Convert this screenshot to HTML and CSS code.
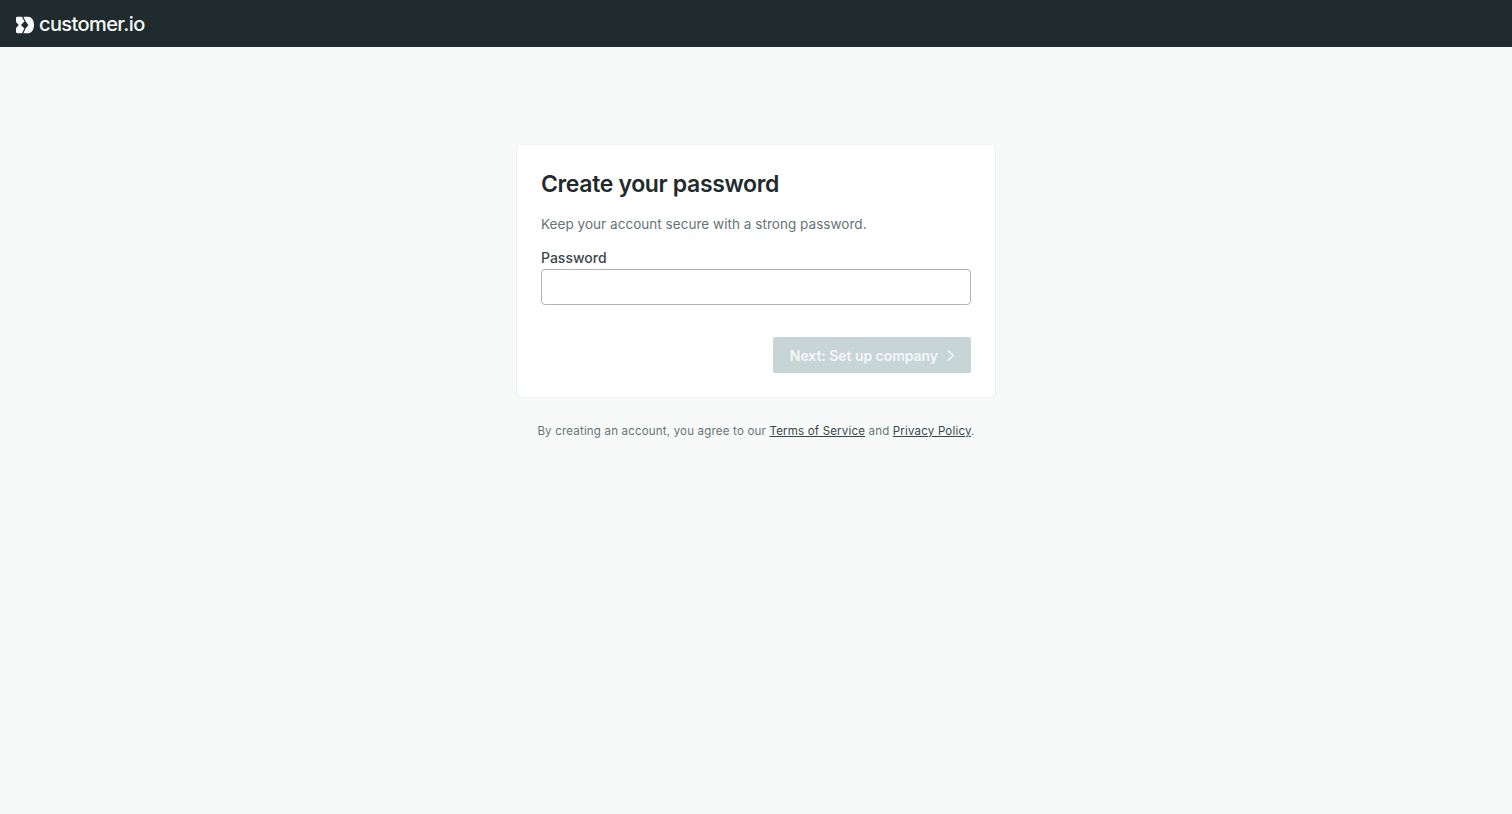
FILE: index.html
```html
<!DOCTYPE html>
<html lang="en">
<head>
    <meta charset="UTF-8">
    <meta name="viewport" content="width=device-width, initial-scale=1.0">
    <title>Create your password</title>
    <link rel="stylesheet" href="styles.css">
</head>
<body>
    <header class="topbar">
        <a class="logo" href="#">
            <svg class="logo-mark" width="18" height="18" viewBox="0 0 18 18">
                <path d="M0 2.2Q0 .8 1.4 .8H6L8.4 5.4L5 9L8.4 12.6L6 17.2H1.4Q0 17.2 0 15.8V12L2.8 9L0 6Z" fill="#f7faf8"/>
                <path d="M7.4 .8H12.5C15.8 .8 18 4.6 18 9C18 13.4 15.8 17.2 12.5 17.2H7.4L9.6 12.6L12.4 9L9.6 5.4Z" fill="#f7faf8"/>
            </svg>
            <span class="logo-text">customer.io</span>
        </a>
    </header>
    <main class="page">
        <div class="card">
            <h1>Create your password</h1>
            <p class="intro">Keep your account secure with a strong password.</p>
            <form>
                <label for="password">Password</label>
                <input type="password" id="password">
                <div class="actions">
                    <button type="button" disabled>
                        Next: Set up company
                        <svg class="chevron" width="9" height="13" viewBox="0 0 9 13"><path d="M2 1.5L7 6.5L2 11.5" fill="none" stroke="currentColor" stroke-width="1.6"/></svg>
                    </button>
                </div>
            </form>
        </div>
        <p class="terms">By creating an account, you agree to our <a href="#">Terms of Service</a> and <a href="#">Privacy Policy</a>.</p>
    </main>
</body>
</html>
```

FILE: styles.css
```css
body {
    font-family: Inter, "Liberation Sans", sans-serif;
    background: #f8faf9;
    color: #1f2b2d;
    margin: 0;
    padding: 0;
}
.topbar {
    display: flex;
    align-items: center;
    height: 47px;
    padding: 0 16px;
    box-sizing: border-box;
    background: #1f2b2d;
}
.logo {
    display: flex;
    align-items: center;
    gap: 5px;
    color: #f7faf8;
    text-decoration: none;
}
.logo-mark {
    margin-top: 2px;
}
.logo-text {
    font-size: 20px;
    font-weight: 500;
    letter-spacing: -0.6px;
}
.page {
    display: flex;
    flex-direction: column;
    align-items: center;
    padding-top: 97px;
}
.card {
    width: 480px;
    box-sizing: border-box;
    padding: 24px;
    background: white;
    border: 1px solid #eef1f0;
    border-radius: 4px;
}
h1 {
    margin: 0;
    font-size: 23px;
    line-height: 30px;
    font-weight: 600;
    letter-spacing: -0.35px;
    color: #1f2b2d;
}
.intro {
    margin: 16px 0 0;
    font-size: 13.5px;
    line-height: 19px;
    color: #667477;
    letter-spacing: 0.04px;
}
label {
    display: block;
    margin-top: 14px;
    font-size: 14px;
    line-height: 20px;
    font-weight: 500;
    color: #3a474a;
}
input {
    display: block;
    width: 100%;
    height: 36px;
    margin-top: 1px;
    box-sizing: border-box;
    background: white;
    border: 1px solid #a9b5b8;
    border-radius: 4px;
}
.actions {
    display: flex;
    justify-content: flex-end;
    margin-top: 32px;
}
button {
    display: flex;
    align-items: center;
    gap: 8px;
    height: 36px;
    padding: 0 16px 0 17px;
    font-family: inherit;
    font-size: 14px;
    font-weight: 600;
    letter-spacing: -0.05px;
    color: #f4f7f7;
    background: #c8d5d6;
    border: none;
    border-radius: 2px;
}
.chevron {
    margin-top: 1px;
}
.terms {
    margin: 25px 0 0;
    font-size: 11.5px;
    line-height: 17px;
    color: #667477;
    letter-spacing: 0.19px;
}
.terms a {
    color: #3a474a;
}
```
